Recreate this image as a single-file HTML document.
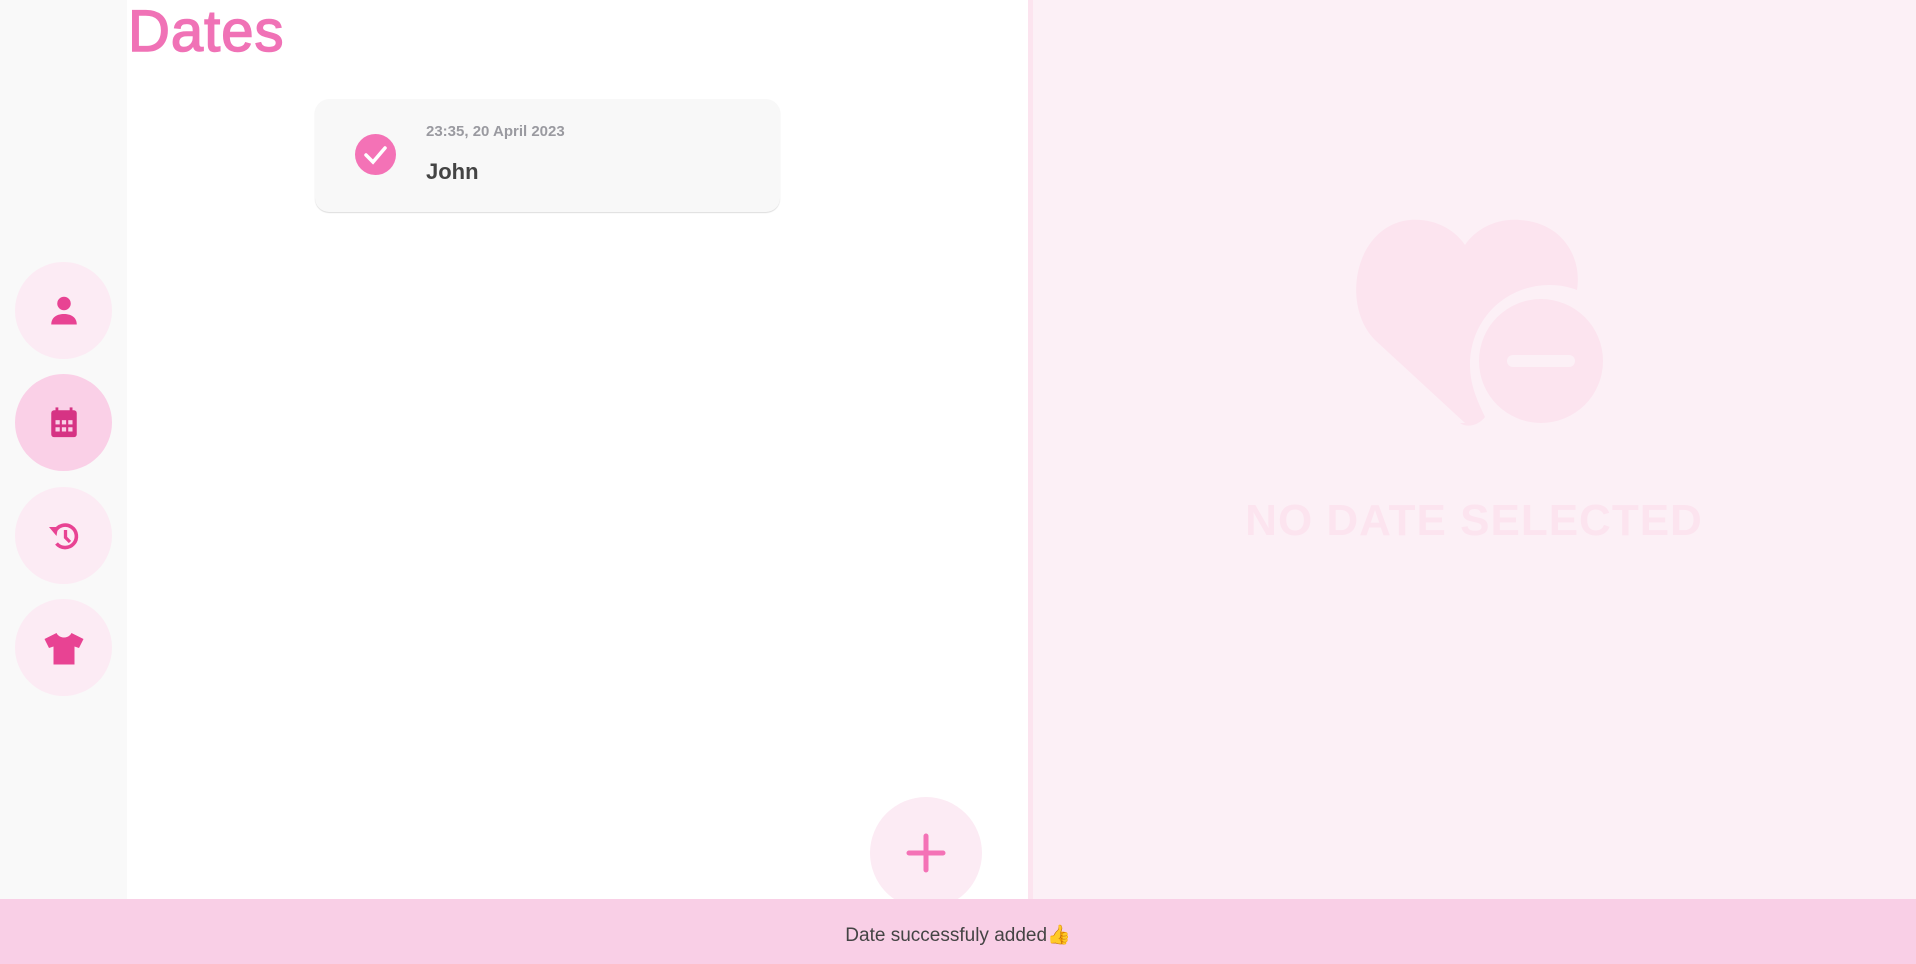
<!DOCTYPE html>
<html><head><meta charset="utf-8"><style>
*{margin:0;padding:0;box-sizing:border-box}
body{width:1916px;height:964px;overflow:hidden;font-family:"Liberation Sans",sans-serif;background:#fff;position:relative}
.side{position:absolute;left:0;top:0;width:127px;height:899px;background:#f9f9f9}
.nav{position:absolute;left:15px;width:97px;height:97px;border-radius:50%;background:#fcebf4;display:flex;align-items:center;justify-content:center}
.nav.a{background:#fad0e7}
.right{position:absolute;left:1028px;top:0;width:888px;height:899px;background:#fcf0f6;border-left:5px solid #fce4ef}
h1{position:absolute;left:128px;top:-2px;font-size:58px;color:#f072b6;font-weight:normal;letter-spacing:1px;-webkit-text-stroke:1.5px #f072b6}
.card{position:absolute;left:315px;top:99px;width:465px;height:113px;border-radius:14px;background:#f8f8f8;box-shadow:0 1px 1px #ddd}
.chk{position:absolute;left:40px;top:35px;width:41px;height:41px;border-radius:50%;background:#f472b6}
.dt{position:absolute;left:111px;top:24px;font-size:15px;font-weight:bold;color:#9a9aa0}
.nm{position:absolute;left:111px;top:60px;font-size:22px;font-weight:bold;color:#444}
.fab{position:absolute;left:870px;top:797px;width:112px;height:112px;border-radius:50%;background:#fcebf4;display:flex;align-items:center;justify-content:center}
.snack{position:absolute;left:0;top:899px;width:1916px;height:65px;background:#f9cfe6;text-align:center;padding-top:24px;font-size:19px;color:#444}
.nds{position:absolute;left:1032px;width:884px;top:496px;text-align:center;font-size:44px;font-weight:bold;color:#fce4ef;letter-spacing:1px}
</style></head><body>
<div class="side">
<div class="nav" style="top:262px"><svg width="36" height="36" viewBox="0 0 24 24"><circle cx="12" cy="7" r="4.5" fill="#e84393"/><path d="M3.5 21c0-5 4-7 8.5-7s8.5 2 8.5 7z" fill="#e84393"/></svg></div>
<div class="nav a" style="top:374px"><svg width="34" height="34" viewBox="0 0 24 24"><rect x="6" y="1" width="2" height="4" fill="#d63384"/><rect x="16" y="1" width="2" height="4" fill="#d63384"/><rect x="3" y="3" width="18" height="19" rx="2" fill="#d63384"/><g fill="#fad0e7"><rect x="6" y="10" width="3" height="3"/><rect x="10.5" y="10" width="3" height="3"/><rect x="15" y="10" width="3" height="3"/><rect x="6" y="15" width="3" height="3"/><rect x="10.5" y="15" width="3" height="3"/><rect x="15" y="15" width="3" height="3"/></g></svg></div>
<div class="nav" style="top:487px"><svg width="36" height="36" viewBox="0 0 24 24"><path d="M6 9a7.5 7.5 0 1 1 1 8" stroke="#e84393" stroke-width="2.4" fill="none"/><path d="M2 6l6 0-1 6z" fill="#e84393"/><path d="M13 8v5l3 3" stroke="#e84393" stroke-width="2.2" fill="none"/></svg></div>
<div class="nav" style="top:599px"><svg width="42" height="38" viewBox="0 0 28 24"><path d="M9 2l-8 4 3 6 3-1v12h14V11l3 1 3-6-8-4c-1 2-3 3-5 3s-4-1-5-3z" fill="#e84393"/></svg></div>
</div>
<h1>Dates</h1>
<div class="card"><div class="chk"><svg width="41" height="41" viewBox="0 0 41 41"><path d="M11 21l7 7 12-14" stroke="#fff" stroke-width="3.5" fill="none" stroke-linecap="round"/></svg></div>
<div class="dt">23:35, 20 April 2023</div><div class="nm">John</div></div>
<div class="fab"><svg width="40" height="40" viewBox="0 0 40 40"><path d="M20 3v34M3 20h34" stroke="#f472b6" stroke-width="5" stroke-linecap="round"/></svg></div>
<div class="right"></div>
<svg style="position:absolute;left:1350px;top:215px" width="260" height="220" viewBox="0 0 260 220">
<path d="M115 208L25 125C-10 90 5 10 60 5c25-2 45 10 55 25c10-15 30-27 55-25c45 3 62 40 57 70c-8-3-17-5-27-5c-45 0-80 35-80 80c0 20 7 35 15 52c-5 7-17 12-25 6z" fill="#fce4ef"/>
<circle cx="191" cy="146" r="62" fill="#fce4ef"/>
<rect x="157" y="140" width="68" height="12" rx="6" fill="#fcf0f6"/>
</svg>
<div class="nds">NO DATE SELECTED</div>
<div class="snack">Date successfuly added👍</div>
</body></html>
